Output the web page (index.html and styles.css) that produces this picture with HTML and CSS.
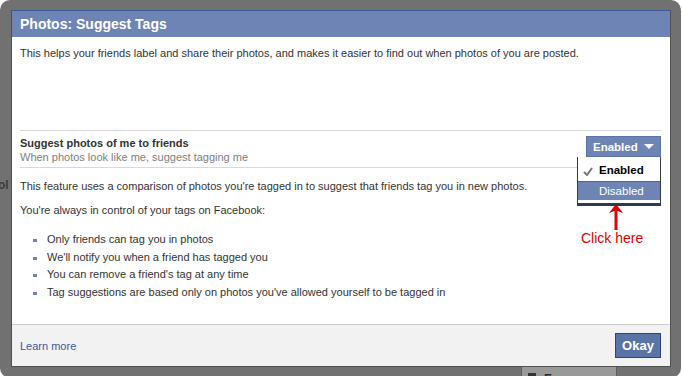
FILE: index.html
```html
<!DOCTYPE html>
<html lang="en">
<head>
    <meta charset="UTF-8">
    <title>Photos: Suggest Tags</title>
    <link rel="stylesheet" href="styles.css">
</head>
<body>

    <div class="frame">
        <span class="page-peek">ol</span>
        <div class="page-button"><span class="page-icon"></span>Everyone</div>

        <div class="dialog">
            <div class="dialog-header">Photos: Suggest Tags</div>

            <div class="dialog-body">
                <p class="intro">This helps your friends label and share their photos, and makes it easier to find out when photos of you are posted.</p>

                <div class="setting">
                    <div class="setting-text">
                        <div class="setting-title">Suggest photos of me to friends</div>
                        <div class="setting-sub">When photos look like me, suggest tagging me</div>
                    </div>

                    <div class="dropdown">
                        <button class="dropdown-btn">Enabled
                            <svg class="caret" width="10" height="6" viewBox="0 0 10 6"><polygon points="0,0 10,0 5,5" fill="#fff"/></svg>
                        </button>
                        <ul class="dropdown-menu">
                            <li class="selected">
                                <svg class="check" width="10" height="9" viewBox="0 0 10 9"><polyline points="1,5 4,8 9,1" fill="none" stroke="#777" stroke-width="2"/></svg>
                                Enabled
                            </li>
                            <li class="active">Disabled</li>
                        </ul>
                        <!-- annotation on the screenshot -->
                        <svg class="hint-arrow" width="14" height="26" viewBox="0 0 14 26">
                            <polygon points="7,0 14,9 8.5,7 8.5,26 5.5,26 5.5,7 0,9" fill="#e00000"/>
                        </svg>
                        <span class="hint-text">Click here</span>
                    </div>
                </div>

                <p class="feature">This feature uses a comparison of photos you're tagged in to suggest that friends tag you in new photos.</p>
                <p class="control">You're always in control of your tags on Facebook:</p>

                <ul class="bullets">
                    <li>Only friends can tag you in photos</li>
                    <li>We'll notify you when a friend has tagged you</li>
                    <li>You can remove a friend's tag at any time</li>
                    <li>Tag suggestions are based only on photos you've allowed yourself to be tagged in</li>
                </ul>
            </div>

            <div class="dialog-footer">
                <a href="#" class="learn-more">Learn more</a>
                <button class="okay-btn">Okay</button>
            </div>
        </div>
    </div>

</body>
</html>
```

FILE: styles.css
```css
body {
    margin: 0;
    background: #fff;
    font-family: "Liberation Sans", Arial, sans-serif;
    font-size: 11px;
    color: #333;
}

.frame {
    position: relative;
    width: 681px;
    height: 378px;
    box-sizing: border-box;
    padding: 10px 0 0 11px;
    background: #717171;
    border-radius: 10px;
    overflow: hidden;
}

/* bits of the page behind the overlay */
.page-peek {
    position: absolute;
    left: -2px;
    top: 178px;
    font-weight: bold;
    font-size: 12px;
    color: #3c3c3c;
}

.page-button {
    position: absolute;
    left: 521px;
    top: 366px;
    width: 96px;
    height: 20px;
    border: 1px solid #5e5e5e;
    background: #999;
    color: #2a2a2a;
    font-weight: bold;
    font-size: 12px;
    line-height: 24px;
    padding-left: 22px;
    box-sizing: border-box;
}

.page-icon {
    position: absolute;
    left: 6px;
    top: 6px;
    width: 8px;
    height: 6px;
    background: #333;
}

.dialog {
    position: relative;
    width: 660px;
    height: 357px;
    box-sizing: border-box;
    display: flex;
    flex-direction: column;
    background: #fff;
    border: 1px solid #505050;
    border-top-color: #3b5998;
}

.dialog-header {
    height: 26px;
    line-height: 26px;
    padding-left: 8px;
    background: #6d84b4;
    color: #fff;
    font-size: 14px;
    font-weight: bold;
}

.dialog-body {
    flex: 1;
    padding: 0 9px 0 8px;
}

.dialog-body p {
    margin: 0;
    line-height: 14px;
}

.intro {
    padding-top: 9px;
}

.setting {
    display: flex;
    justify-content: space-between;
    align-items: flex-start;
    margin-top: 70px;
    padding: 5px 0 3px;
    border-top: 1px solid #d9d9d9;
    border-bottom: 1px solid #d9d9d9;
    line-height: 14px;
}

.setting-title {
    font-weight: bold;
    color: #333;
}

.setting-sub {
    color: #808080;
}

.dropdown {
    position: relative;
}

.dropdown-btn {
    display: flex;
    align-items: center;
    justify-content: space-between;
    width: 75px;
    height: 21px;
    padding: 0 6px 0 6px;
    background: #6d84b4;
    border: 1px solid #5b74a8;
    color: #fff;
    font-family: inherit;
    font-size: 11.5px;
    font-weight: bold;
}

.dropdown-menu {
    position: absolute;
    top: 21px;
    right: 0;
    z-index: 2;
    width: 84px;
    margin: 0;
    padding: 0 0 3px;
    list-style: none;
    box-sizing: border-box;
    background: #fff;
    border: 1px solid #3a3a3a;
    border-top: 0;
    border-bottom: 3px solid #2e3b57;
    font-size: 11.5px;
}

.dropdown-menu li {
    position: relative;
    padding-left: 21px;
}

.dropdown-menu .selected {
    height: 24px;
    line-height: 27px;
    font-weight: bold;
    color: #000;
}

.check {
    position: absolute;
    left: 5px;
    top: 10px;
}

.dropdown-menu .active {
    height: 18px;
    line-height: 18px;
    background: #6d84b4;
    border-top: 1px solid #4f6596;
    color: #fff;
}

.hint-arrow {
    position: absolute;
    left: 23px;
    top: 68px;
}

.hint-text {
    position: absolute;
    left: -5px;
    top: 95px;
    white-space: nowrap;
    color: #e00000;
    font-size: 14px;
}

.feature {
    margin-top: 11px !important;
}

.control {
    margin-top: 10px !important;
}

.bullets {
    margin: 14px 0 0;
    padding-left: 27px;
    list-style: none;
}

.bullets li {
    position: relative;
    line-height: 17.7px;
}

.bullets li::before {
    content: "";
    position: absolute;
    left: -14px;
    top: 8px;
    width: 4px;
    height: 3px;
    background: #6d84b4;
}

.dialog-footer {
    height: 41px;
    display: flex;
    align-items: center;
    justify-content: space-between;
    padding: 0 9px 0 8px;
    background: #f2f2f2;
    border-top: 1px solid #ccc;
}

.learn-more {
    color: #3b5998;
    text-decoration: none;
}

.okay-btn {
    width: 46px;
    height: 25px;
    background: #5b74a8;
    border: 1px solid #29447e;
    color: #fff;
    font-family: inherit;
    font-size: 13px;
    font-weight: bold;
}
```
